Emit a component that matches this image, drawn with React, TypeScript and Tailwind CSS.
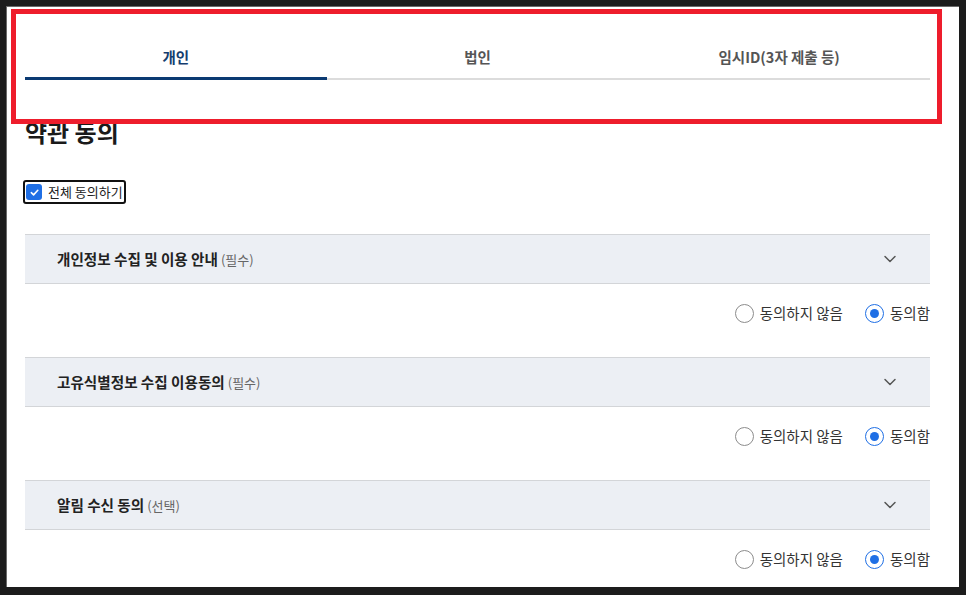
import { ChevronDown } from 'lucide-react';

type Term = { title: string; tag: string };

const terms: Term[] = [
  { title: '개인정보 수집 및 이용 안내', tag: '(필수)' },
  { title: '고유식별정보 수집 이용동의', tag: '(필수)' },
  { title: '알림 수신 동의', tag: '(선택)' },
];

const tabs = ['개인', '법인', '임시ID(3자 제출 등)'];

function Radio({ checked, label }: { checked: boolean; label: string }) {
  return (
    <label className="flex items-center gap-[6px]">
      {checked ? (
        <span className="w-[19px] h-[19px] rounded-full border-[1.5px] border-[#1f6fe5] flex items-center justify-center bg-white">
          <span className="w-[9px] h-[9px] rounded-full bg-[#1f6fe5]" />
        </span>
      ) : (
        <span className="w-[19px] h-[19px] rounded-full border-[1.5px] border-[#8c8c8c] bg-white" />
      )}
      <span className="text-[14.5px] leading-[20px] text-[#333]">{label}</span>
    </label>
  );
}

export default function App() {
  return (
    <div
      className="w-[966px] h-[595px] bg-[#1c1c1c] pt-[6px] pl-[6px] pr-[7px] pb-[8px] relative"
      style={{ fontFamily: '"Noto Sans CJK KR", "Noto Sans", sans-serif' }}
    >
      <div className="h-full bg-white border-t border-l border-[#6a6a6a] pl-[18px] pr-[29px] pt-[40px] overflow-hidden">
        <div className="flex shadow-[inset_0_-2px_0_#dcdcdc]">
          {tabs.map((t, i) => (
            <div
              key={t}
              className={`flex-1 text-center text-[14.5px] leading-[20px] font-bold pb-[10px] border-b-[3px] ${i === 0 ? 'border-[#0b3a72] text-[#153d6e]' : 'border-transparent text-[#555]'}`}
            >
              {t}
            </div>
          ))}
        </div>

        <h2 className="mt-[36px] text-[24px] leading-[32px] font-bold text-[#1a1a1a]">약관 동의</h2>

        <label className="mt-[32px] inline-flex items-center gap-[6px] border-2 border-[#111] rounded-[3px] h-[24px] pl-[1px] pr-[1px] -ml-[2px]">
          <span className="w-[16px] h-[16px] rounded-[3px] bg-[#1f6fe5] flex items-center justify-center">
            <svg width="11" height="11" viewBox="0 0 12 12" fill="none">
              <path d="M2.5 6.2 5 8.6 9.6 3.6" stroke="white" strokeWidth="1.7" strokeLinecap="round" strokeLinejoin="round" />
            </svg>
          </span>
          <span className="text-[13px] leading-[18px] text-[#222]">전체 동의하기</span>
        </label>

        <div className="mt-[30px] flex flex-col">
          {terms.map((term, i) => (
            <div key={term.title} className={i === 0 ? '' : 'mt-[34px]'}>
              <div className="h-[50px] bg-[#eceff4] border-y border-[#d3d5d8] pl-[32px] pr-[30px] flex items-center justify-between">
                <div className="flex items-baseline gap-[3px]">
                  <span className="text-[14.6px] font-bold text-[#222]">{term.title}</span>
                  <span className="text-[13px] text-[#666]">{term.tag}</span>
                </div>
                <ChevronDown size={20} strokeWidth={1.8} className="text-[#555]" />
              </div>
              <div className="pt-[19px] flex justify-end gap-[22px]">
                <Radio checked={false} label="동의하지 않음" />
                <Radio checked={true} label="동의함" />
              </div>
            </div>
          ))}
        </div>
      </div>

      <div className="absolute left-[11px] top-[9px] w-[931px] h-[115px] border-[5px] border-[#ee1d2c] pointer-events-none" />
    </div>
  );
}
